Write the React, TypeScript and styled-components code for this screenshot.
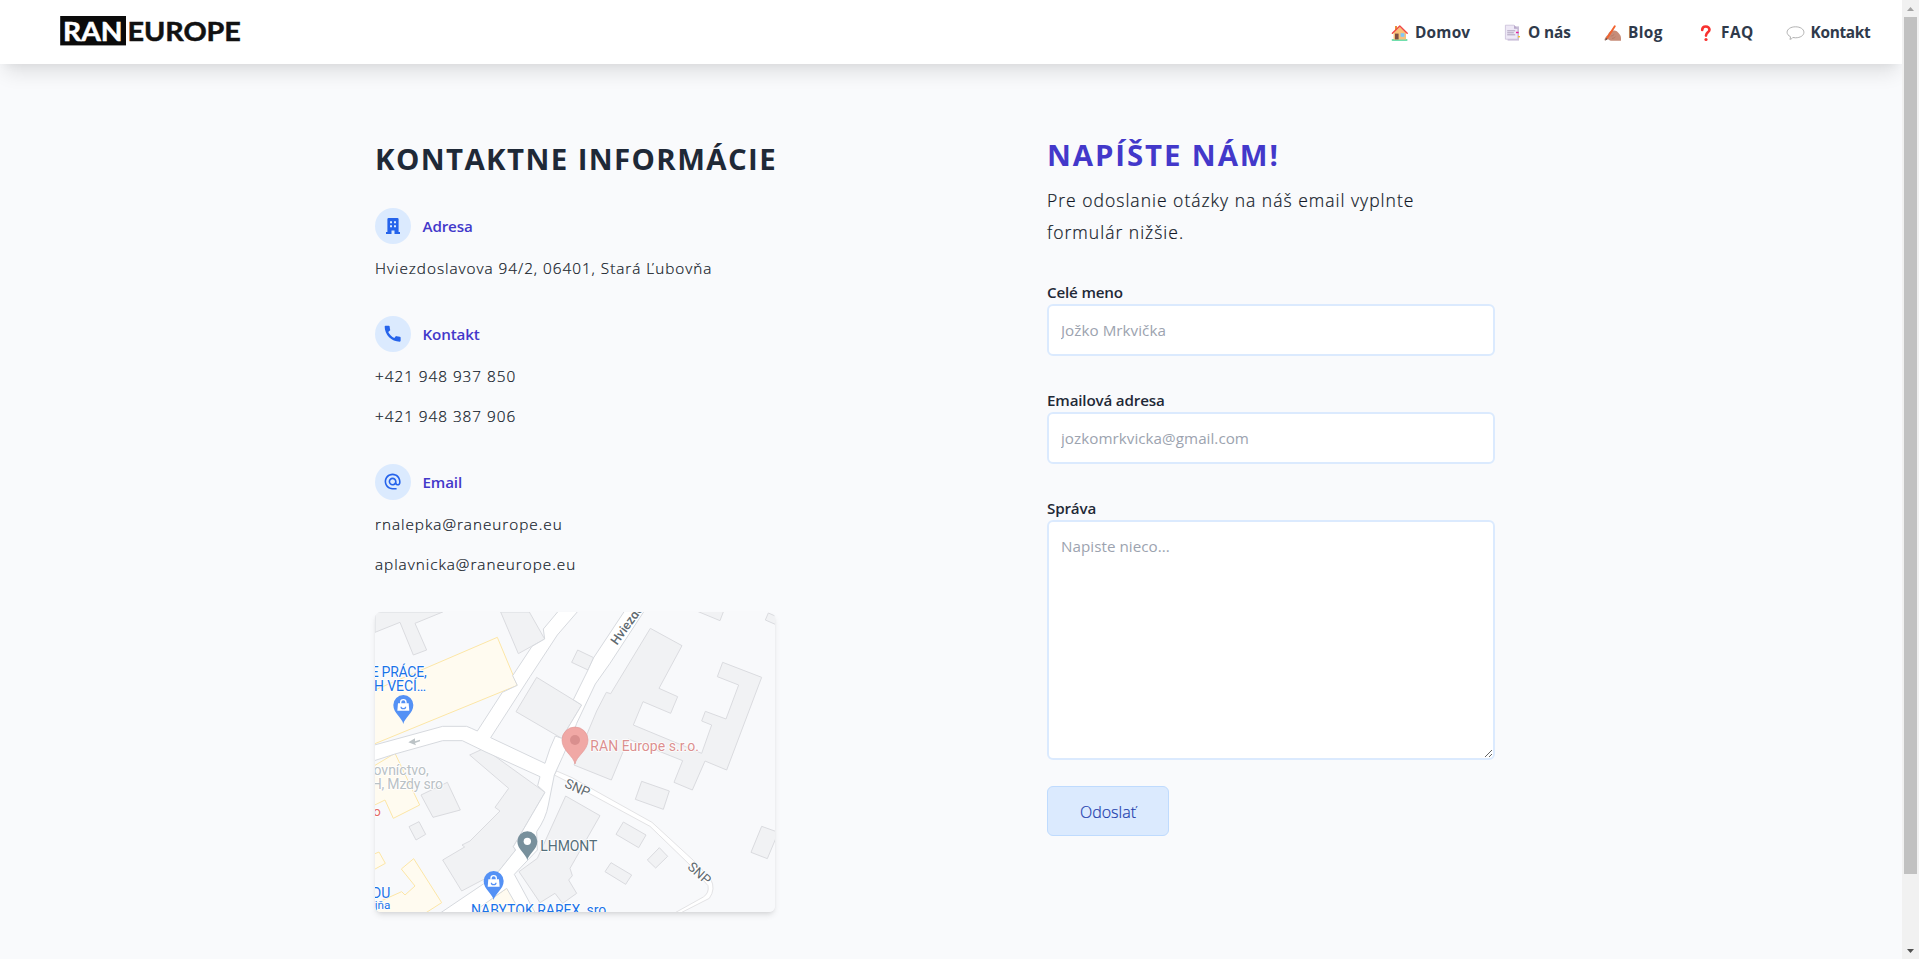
import React from 'react';
import styled, { createGlobalStyle } from 'styled-components';
import { MdAlternateEmail, MdCall } from 'react-icons/md';

const GlobalStyle = createGlobalStyle`
  *, *::before, *::after { box-sizing: border-box; }
  html, body { margin: 0; height: 100%; overflow: hidden; }
  body {
    background: #f9fafc;
    color: #1f2937;
    font-family: 'Open Sans', 'Noto Sans', sans-serif;
    font-size: 15.2px;
    line-height: 24px;
  }
  h2, p, ul { margin: 0; padding: 0; }
`;

const Page = styled.div`
  display: grid;
  grid-template-columns: 1fr 17px;
  height: 959px;
  overflow: hidden;
`;

const Content = styled.div`
  min-width: 0;
  overflow: hidden;
`;

const Header = styled.header`
  display: flex;
  align-items: center;
  justify-content: space-between;
  height: 64px;
  padding: 0 31px 0 60px;
  background: #fff;
  box-shadow: 0 13px 20px -5px rgba(0, 0, 0, 0.11), 0 5px 10px -5px rgba(0, 0, 0, 0.06);
`;

const LogoSvg = styled.svg`
  display: block;
  margin-bottom: 3px;
  font-family: Lato, sans-serif;
  font-weight: 900;
`;

const Nav = styled.nav`
  display: flex;
  padding-top: 2px;
`;

const NavItem = styled.a<{ $width: number; $spacing?: number }>`
  display: flex;
  align-items: center;
  width: ${(p) => p.$width}px;
  color: #2f3a4b;
  font-size: 15.4px;
  font-weight: 700;
  letter-spacing: ${(p) => p.$spacing ?? 0}px;
  text-decoration: none;
  white-space: nowrap;
`;

const NavIcon = styled.svg`
  flex: none;
  width: 20px;
  height: 18px;
  margin-right: 5px;
`;

const Main = styled.main`
  display: grid;
  grid-template-columns: 480px 480px;
  column-gap: 192px;
  width: 1152px;
  margin: 0 auto;
`;

const InfoColumn = styled.section`
  padding-top: 77px;
`;

const FormColumn = styled.section`
  padding-top: 73px;
`;

const Title = styled.h2<{ $accent?: boolean }>`
  color: ${(p) => (p.$accent ? '#4338ca' : '#1f2937')};
  font-size: 29.4px;
  font-weight: 700;
  line-height: 36px;
  letter-spacing: ${(p) => (p.$accent ? 1.9 : 1.4)}px;
  white-space: nowrap;
`;

const InfoGroup = styled.div`
  margin-top: 36px;
  &:first-of-type { margin-top: 31px; }
`;

const InfoHead = styled.div`
  display: flex;
  align-items: center;
  gap: 11.5px;
  color: #4338ca;
  font-weight: 580;
  letter-spacing: -0.15px;
`;

const IconCircle = styled.span`
  display: flex;
  align-items: center;
  justify-content: center;
  width: 36px;
  height: 36px;
  border-radius: 50%;
  background: #dbeafe;
  color: #2563eb;
`;

const InfoLine = styled.p`
  margin-top: 16px;
  color: #111827;
  font-size: 15.3px;
  font-weight: 350;
  -webkit-text-stroke: 0.2px currentColor;
  letter-spacing: 0.98px;
  white-space: nowrap;
  ${InfoHead} + & { margin-top: 12px; }
`;

const MapCard = styled.div`
  width: 400px;
  height: 300px;
  margin-top: 36px;
  border-radius: 6px;
  overflow: hidden;
  background: #f8f9fb;
  box-shadow: 0 4px 6px -1px rgba(0, 0, 0, 0.1), 0 2px 4px -2px rgba(0, 0, 0, 0.1);
`;

const MapSvg = styled.svg`
  display: block;
  width: 400px;
  height: 300px;
  font-family: Roboto, sans-serif;
  text { paint-order: stroke; stroke: #fff; stroke-width: 5px; stroke-linejoin: round; }
`;

const Lead = styled.p`
  width: 400px;
  margin: 11px 0 32px;
  color: #111827;
  font-size: 17.5px;
  font-weight: 350;
  -webkit-text-stroke: 0.2px currentColor;
  line-height: 32px;
  letter-spacing: 1.01px;
`;

const Form = styled.form`
  width: 448px;
`;

const Field = styled.label`
  display: block;
  margin-bottom: 32px;
  font-weight: 580;
  letter-spacing: -0.17px;
  &:last-of-type { margin-bottom: 26px; }
`;

const Input = styled.input`
  display: block;
  width: 100%;
  height: 52px;
  padding: 0 12px;
  border: 2px solid #dbeafe;
  border-radius: 6px;
  outline: none;
  background: #fff;
  color: #1f2937;
  font: 400 15.2px/24px 'Open Sans', 'Noto Sans', sans-serif;
  letter-spacing: 0.04px;
  &::placeholder { color: #9ca3af; opacity: 1; }
`;

const TextArea = styled(Input).attrs({ as: 'textarea' })`
  height: 240px;
  padding: 12px;
  resize: vertical;
`;

const SubmitButton = styled.button`
  display: block;
  width: 122px;
  height: 50px;
  padding: 1px 0 0;
  border: 1px solid #bfdbfe;
  border-radius: 6px;
  background: #dbeafe;
  color: #1e3fae;
  font: 350 16px/24px 'Open Sans', 'Noto Sans', sans-serif;
  -webkit-text-stroke: 0.2px currentColor;
  letter-spacing: 0;
`;

const Scrollbar = styled.div`
  display: flex;
  flex-direction: column;
  align-items: center;
  justify-content: space-between;
  height: 959px;
  background: #f1f1f1;
`;

const ScrollArrow = styled.svg`
  display: block;
  width: 17px;
  height: 17px;
`;

const ScrollTrack = styled.div`
  flex: 1;
  width: 13px;
`;

const ScrollThumb = styled.div`
  height: 857px;
  background: #c1c1c1;
`;

function Logo() {
  return (
    <LogoSvg width="182" height="32" viewBox="0 0 182 32">
      <rect x="0.2" y="1" width="65.8" height="29.4" fill="#0b0b0b" />
      <text x="3" y="25.7" fontSize="26.5" fontWeight="700" stroke="#fff" strokeWidth="0.5" fill="#fff" textLength="59.5" lengthAdjust="spacingAndGlyphs">RAN</text>
      <text x="67.4" y="25.7" fontSize="26.5" fontWeight="700" stroke="#111" strokeWidth="0.5" fill="#111" textLength="113.5" lengthAdjust="spacingAndGlyphs">EUROPE</text>
    </LogoSvg>
  );
}

const HouseIcon = () => (
  <NavIcon viewBox="0 0 20 18">
    <rect x="1.6" y="15.2" width="16" height="1.6" rx="0.8" fill="#42d392" />
    <rect x="5" y="2" width="2" height="4.5" fill="#e8933a" />
    <path d="M3.6 8.4 9.8 3l6.2 5.4v7H3.6z" fill="#f9c27a" />
    <rect x="5" y="9.6" width="3.6" height="5.8" fill="#7d4f43" />
    <rect x="10.6" y="9.2" width="3.8" height="3.6" fill="#80c8f8" />
    <path d="M2.4 9.2 9.8 2l7.4 7.2" fill="none" stroke="#f04b46" strokeWidth="1.5" strokeLinecap="round" strokeLinejoin="round" />
  </NavIcon>
);

const PagesIcon = () => (
  <NavIcon viewBox="0 0 20 18">
    <path d="M4.6 2.4H16v14.2H4.6z" fill="#c9bed8" />
    <path d="M2.4 1.2H11l3.8 3.6v10.4H2.4z" fill="#eee8f6" stroke="#c4b8d4" strokeWidth="0.7" />
    <path d="M11 1.2v3.6h3.8z" fill="#b9aacb" />
    <path d="M4.2 6.8h8M4.2 8.8h6.6M4.2 10.8h8" stroke="#a598b6" strokeWidth="0.9" />
    <rect x="13" y="7.8" width="2.6" height="1.4" fill="#e5209a" />
    <rect x="15" y="12" width="2" height="1.4" fill="#f8c12c" />
  </NavIcon>
);

const WritingIcon = () => (
  <NavIcon viewBox="0 0 20 18">
    <path d="M1.4 16.2c.2-2.2 1.6-3.600 3-5 .8-.9 1.200-2.800 2.600-3.800 1.400-1 2.800-.9 4.200-.8 2 .1 3.400 1.300 4.600 2.700 1.400 1.600 2.200 3 2.200 4.900v2.500H8c-1.600 0-2-1.500-3.200-1.500-1.200 0-1.800 1.400-3.400 1z" fill="#c68c78" />
    <path d="M7.6 12.2c1.400-.1 2.600-.8 3.600-1.800M9 14.4c1.400 0 2.600-.6 3.400-1.5" fill="none" stroke="#ad7361" strokeWidth="0.7" />
    <path d="M4 14.2 11.8 2.2" stroke="#f2622e" strokeWidth="1.9" strokeLinecap="round" />
    <path d="m2.2 16.8.8-2.8 1.5 1z" fill="#5a4a44" />
  </NavIcon>
);

const QuestionIcon = () => (
  <NavIcon viewBox="0 0 20 18">
    <path d="M6.2 5.9C6.2 3.8 7.6 2.5 9.8 2.5s3.7 1.3 3.7 3.2c0 2.7-3.5 2.7-3.5 5.9" fill="none" stroke="#f8312f" strokeWidth="2.6" strokeLinecap="round" />
    <circle cx="10" cy="15.5" r="1.6" fill="#f8312f" />
  </NavIcon>
);

const BubbleIcon = () => (
  <NavIcon viewBox="0 0 20 18">
    <path d="M9.5 2.8c4.8 0 8.4 2.3 8.4 5.5s-3.6 5.5-8.4 5.5c-.9 0-1.8-.1-2.6-.3-.6.8-1.4 1.5-3 1.8.5-.8.7-1.7.5-2.7C2.3 11.6 1.1 10.1 1.1 8.3c0-3.2 3.6-5.5 8.4-5.5z" fill="#fff" stroke="#a8a8a8" strokeWidth="0.9" />
  </NavIcon>
);

const BuildingIcon = () => (
  <svg width="16" height="18" viewBox="0 0 16 18" fill="currentColor">
    <path fillRule="evenodd" d="M3.6 1h8.8a1.2 1.2 0 0 1 1.2 1.2V15H15v2H9.5v-3.5h-3V17H1v-2h1.4V2.2A1.2 1.2 0 0 1 3.6 1zM5 4.2v2h2v-2zM9 4.2v2h2v-2zM5 8.2v2h2v-2zM9 8.2v2h2v-2z" />
  </svg>
);

function ShopPin({ x, y }: { x: number; y: number }) {
  return (
    <g transform={`translate(${x} ${y})`}>
      <path d="M0 57C-3 39-30 25-30 0a30 30 0 0 1 60 0C30 25 3 39 0 57z" fill="#5491f5" />
      <path d="M-16-5h32l2 22h-36z" fill="#fff" />
      <path d="M-8-4v-4a8 8 0 0 1 16 0v4" fill="none" stroke="#fff" strokeWidth="4" />
      <path d="M-7 5a7 6 0 0 0 14 0" fill="none" stroke="#5491f5" strokeWidth="3.5" />
    </g>
  );
}

const buildings = [
  '15,21 15,82 90,52 130,150 170,135 135,55 218,21',
  '392,21 445,146 524,102 478,21',
  '500,217 438,320 575,400 635,300',
  '623,135 605,172 654,195 671,158',
  '841,70 936,122 867,250 923,275 902,325 819,290 790,360 995,445 1025,360 995,348 1006,319 1068,342 1106,240 1042,215 1058,172 1175,217 1070,495 1005,468 967,555 912,532 938,467 775,402 724,525 612,480 680,318 709,262 722,266',
  '815,529 898,558 880,613 796,583',
  '760,651 828,690 806,728 738,688',
  '868,728 893,754 857,789 832,765',
  '723,773 785,810 767,838 705,800',
  '1175,664 1225,682 1192,761 1143,742',
  '980,18 1050,47 1061,18',
  '1195,24 1225,37 1225,62 1186,45',
  '299,450 342,430 525,562 430,725 437,735 385,800 275,858 218,765 284,726 276,720 300,708 390,618 375,607 416,550',
  '153,570 232,532 271,615 189,637',
  '117,665 147,650 167,688 138,705',
  '587,573 690,632 600,790 607,812 596,825 620,865 578,895 555,865 510,893 447,800 502,760',
];

const shops = [
  '10,257 382,97 442,241 10,418',
  '10,484 75,445 149,600 70,640 45,585 10,602',
  '10,748 27,741 46,775 10,795',
  '10,898 95,860 105,870 135,843 94,792 131,761 215,893 165,925 10,925',
  '300,925 410,850 447,905 455,925',
];

function OfficeMap() {
  return (
    <MapSvg viewBox="15 21 1200 900">
      <rect x="15" y="21" width="1200" height="900" fill="#f8f9fb" />
      <g fill="#f1f2f4" stroke="#dadbdf" strokeWidth="3">
        {buildings.map((points) => <polygon key={points} points={points} />)}
      </g>
      <g fill="#fffbf0" stroke="#fce6a6" strokeWidth="3">
        {shops.map((points) => <polygon key={points} points={points} />)}
      </g>
      <g fill="#fff" stroke="#d6d9de" strokeWidth="3">
        <path d="M1015 940 885 940 1000 876Q1018 864 1014 842L960 780 840 664 600 534 553 510 560 498 606 518 846 652 970 766 1022 822Q1038 852 1018 880L900 940z" stroke="#e3e3e5" />
        <path d="M567 16 520 72 524 102 486 124 428 212 442 241 397 262 322 378Q305 370 290 364H218L10 421V468L75 447 218 407H277L345 440 510 515 503 542 525 562 430 725 437 735 385 800 340 837 205 928H300L410 850 455 928H498L433 808 502 735 500 680Q528 640 535 600L553 510 578 455 612 378 620 355 676 237 720 175 824 16H765L671 158 654 195 610 284 635 300 575 400 556 393 540 430 525 475 362 398 480 215 562 90 626 16z" />
      </g>
      <path d="M115 412l20-12v9l15-5v5l-15 5 3 7z" fill="#bcc3c6" />
      <g fontSize="42">
        <g fill="#1a73e8" textAnchor="end">
          <text x="170" y="216" textLength="168">E PRÁCE,</text>
          <text x="168" y="258" textLength="156">H VECÍ…</text>
          <text x="61" y="880">DU</text>
          <text x="61" y="912" fontSize="35">jňa</text>
        </g>
        <g fill="#b9c1c5" textAnchor="end">
          <text x="176" y="511">ovníctvo,</text>
          <text x="219" y="552" textLength="214">H, Mzdy sro</text>
        </g>
        <text x="10" y="633" fill="#e46962" fontSize="40">o</text>
        <text x="303" y="930" fill="#1a73e8" textLength="406">NABYTOK RAREX, sro</text>
        <text x="511" y="738" fill="#546e7a" textLength="171">LHMONT</text>
        <text x="661" y="438" fill="#db8f8f" textLength="326">RAN Europe s.r.o.</text>
      </g>
      <g fill="#5f6a70" fontSize="40" textAnchor="middle">
        <text transform="translate(617 561) rotate(24)">SNP</text>
        <text transform="translate(979 815) rotate(42)">SNP</text>
        <text transform="translate(741 122) rotate(-54)" textAnchor="start" fontSize="38" fontWeight="500">Hviezdoslavova</text>
      </g>
      <ShopPin x={100} y={300} />
      <ShopPin x={371} y={828} />
      <path d="M472 766c-3-18-30-32-30-57a30 30 0 0 1 60 0c0 25-27 39-30 57z" fill="#78909c" />
      <circle cx="472" cy="709" r="11" fill="#fff" />
      <path d="M615 477c-4-24-39-40-39-72a39 39 0 0 1 78 0c0 32-35 48-39 72z" fill="#f0a8a5" stroke="#e29a98" strokeWidth="2" />
      <circle cx="615" cy="405" r="15" fill="#d98f8e" />
    </MapSvg>
  );
}

export default function App() {
  return (
    <>
      <GlobalStyle />
      <Page>
        <Content>
          <Header>
            <Logo />
            <Nav>
              <NavItem $width={113} $spacing={0.2}><HouseIcon />Domov</NavItem>
              <NavItem $width={100} $spacing={-0.1}><PagesIcon />O nás</NavItem>
              <NavItem $width={93} $spacing={0.4}><WritingIcon />Blog</NavItem>
              <NavItem $width={89.5} $spacing={0.5}><QuestionIcon />FAQ</NavItem>
              <NavItem $width={85.5} $spacing={-0.3}><BubbleIcon />Kontakt</NavItem>
            </Nav>
          </Header>
          <Main>
            <InfoColumn>
              <Title>KONTAKTNE INFORMÁCIE</Title>
              <InfoGroup>
                <InfoHead><IconCircle><BuildingIcon /></IconCircle>Adresa</InfoHead>
                <InfoLine>Hviezdoslavova 94/2, 06401, Stará Ľubovňa</InfoLine>
              </InfoGroup>
              <InfoGroup>
                <InfoHead><IconCircle><MdCall size={21.3} /></IconCircle>Kontakt</InfoHead>
                <InfoLine>+421 948 937 850</InfoLine>
                <InfoLine>+421 948 387 906</InfoLine>
              </InfoGroup>
              <InfoGroup>
                <InfoHead><IconCircle><MdAlternateEmail size={19.2} /></IconCircle>Email</InfoHead>
                <InfoLine>rnalepka@raneurope.eu</InfoLine>
                <InfoLine>aplavnicka@raneurope.eu</InfoLine>
              </InfoGroup>
              <MapCard><OfficeMap /></MapCard>
            </InfoColumn>
            <FormColumn>
              <Title $accent>NAPÍŠTE NÁM!</Title>
              <Lead>Pre odoslanie otázky na náš email vyplnte formulár nižšie.</Lead>
              <Form onSubmit={(e) => e.preventDefault()}>
                <Field>Celé meno<Input placeholder="Jožko Mrkvička" /></Field>
                <Field>Emailová adresa<Input placeholder="jozkomrkvicka@gmail.com" /></Field>
                <Field>Správa<TextArea placeholder="Napiste nieco..." /></Field>
                <SubmitButton>Odoslať</SubmitButton>
              </Form>
            </FormColumn>
          </Main>
        </Content>
        <Scrollbar>
          <ScrollArrow viewBox="0 0 17 17"><path d="M5 11l3.5-4 3.5 4z" fill="#a3a3a3" /></ScrollArrow>
          <ScrollTrack><ScrollThumb /></ScrollTrack>
          <ScrollArrow viewBox="0 0 17 17"><path d="M5 7h7l-3.5 4z" fill="#505050" /></ScrollArrow>
        </Scrollbar>
      </Page>
    </>
  );
}
